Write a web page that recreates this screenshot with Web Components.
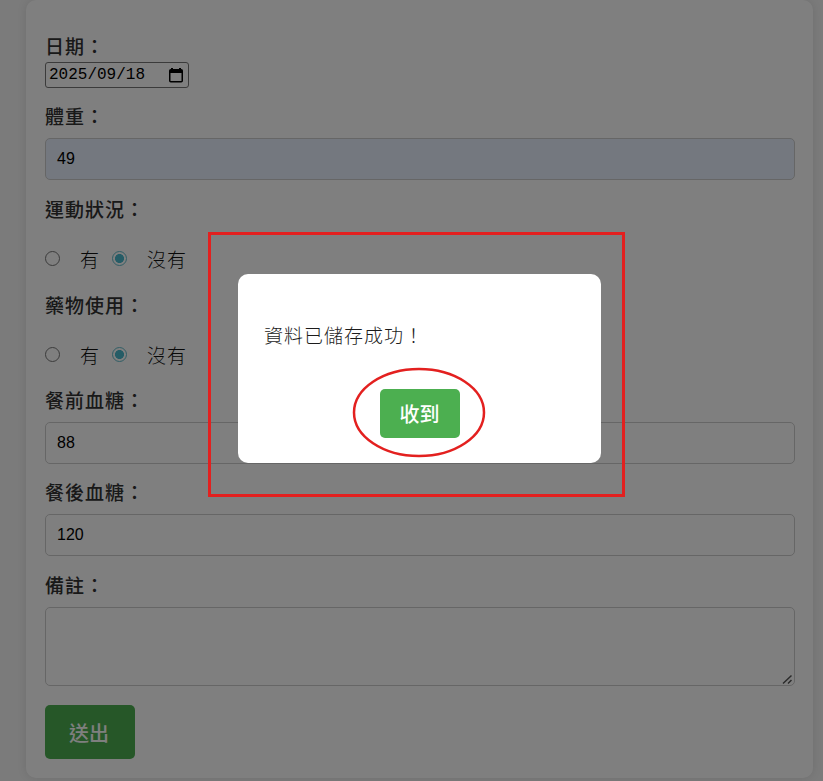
<!DOCTYPE html>
<html lang="zh-Hant">
<head>
<meta charset="utf-8">
<title>健康紀錄</title>
<style>
  html, body { margin: 0; height: 781px; overflow: hidden; background: #f6f6f6; }
  body { font-family: "Noto Sans CJK TC", "Noto Sans", sans-serif; color: #333; }
</style>
</head>
<body>

<x-form-card>
  <x-date-field label="日期：" value="2025/09/18"></x-date-field>
  <x-text-field label="體重：" value="49" autofilled style="margin-bottom:17px"></x-text-field>
  <x-radio-field label="運動狀況：" name="exercise"></x-radio-field>
  <x-radio-field label="藥物使用：" name="medicine"></x-radio-field>
  <x-text-field label="餐前血糖：" value="88"></x-text-field>
  <x-text-field label="餐後血糖：" value="120" style="margin-bottom:17px"></x-text-field>
  <x-note-field label="備註："></x-note-field>
  <x-button>送出</x-button>
</x-form-card>

<x-modal>
  資料已儲存成功！
  <x-button slot="action" small>收到</x-button>
</x-modal>

<script>
const labelCss = `
  .label { display: block; font-size: 19px; letter-spacing: 1px; font-weight: 500; line-height: 24px; color: #333; }
`;

class XFormCard extends HTMLElement {
  constructor() {
    super();
    this.attachShadow({ mode: 'open' });
    this.shadowRoot.innerHTML = `
      <style>
        :host {
          display: block;
          box-sizing: border-box;
          width: 787px;
          height: 778px;
          margin-left: 26px;
          padding: 34px 18px 0 19px;
          background: #fff;
          border-radius: 10px;
          box-shadow: 0 0 10px rgba(0,0,0,0.1);
        }
      </style>
      <slot></slot>
    `;
  }
}

class XDateField extends HTMLElement {
  constructor() {
    super();
    this.attachShadow({ mode: 'open' });
  }

  connectedCallback() {
    this.shadowRoot.innerHTML = `
      <style>
        :host { display: block; margin-bottom: 16px; }
        ${labelCss}
        .date {
          box-sizing: border-box;
          display: flex;
          align-items: center;
          justify-content: space-between;
          width: 144px;
          height: 26px;
          margin-top: 4px;
          padding: 0 3px;
          border: 1px solid #767676;
          border-radius: 3px;
          font: 16px "Liberation Mono", monospace;
          color: #000;
        }
        svg { display: block; margin-right: 1px; }
      </style>
      <span class="label">${this.getAttribute('label')}</span>
      <div class="date">
        <span>${this.getAttribute('value')}</span>
        <svg width="16" height="16" viewBox="0 0 16 16">
          <path d="M4 1v2M12 1v2" stroke="#000" stroke-width="2" fill="none"/>
          <rect x="1.75" y="2.75" width="12.5" height="12" rx="1" fill="none" stroke="#000" stroke-width="1.5"/>
          <rect x="2" y="3" width="12" height="3" fill="#000"/>
        </svg>
      </div>
    `;
  }
}

class XTextField extends HTMLElement {
  constructor() {
    super();
    this.attachShadow({ mode: 'open' });
  }

  connectedCallback() {
    this.shadowRoot.innerHTML = `
      <style>
        :host { display: block; margin-bottom: 16px; }
        ${labelCss}
        .input {
          box-sizing: border-box;
          height: 42px;
          margin-top: 10px;
          padding: 0 11px;
          border: 1px solid #ccc;
          border-radius: 5px;
          font: 16px/40px "Liberation Sans", Arial, sans-serif;
          color: #000;
        }
        :host([autofilled]) .input { background: #e8f0fe; }
      </style>
      <span class="label">${this.getAttribute('label')}</span>
      <div class="input">${this.getAttribute('value')}</div>
    `;
  }
}

class XRadioField extends HTMLElement {
  constructor() {
    super();
    this.attachShadow({ mode: 'open' });
  }

  connectedCallback() {
    const name = this.getAttribute('name');
    this.shadowRoot.innerHTML = `
      <style>
        :host { display: block; margin-bottom: 19px; }
        ${labelCss}
        .options {
          display: flex;
          align-items: center;
          height: 30px;
          margin-top: 22.5px;
          font-size: 19px;
          letter-spacing: 1px;
          font-weight: 300;
          color: #111;
        }
        input { width: 15px; height: 15px; margin: 0; }
        input:checked {
          appearance: none;
          box-sizing: border-box;
          border: 1px solid #62bccb;
          border-radius: 50%;
          background: radial-gradient(circle, #4ab8cc 0 4.2px, transparent 4.8px);
        }
        .yes { margin: 0 12px 0 20px; }
        .no { margin-left: 20px; }
      </style>
      <span class="label">${this.getAttribute('label')}</span>
      <div class="options">
        <input type="radio" name="${name}"><span class="yes">有</span>
        <input type="radio" name="${name}" checked><span class="no">沒有</span>
      </div>
    `;
  }
}

class XNoteField extends HTMLElement {
  constructor() {
    super();
    this.attachShadow({ mode: 'open' });
  }

  connectedCallback() {
    this.shadowRoot.innerHTML = `
      <style>
        :host { display: block; margin-bottom: 19px; }
        ${labelCss}
        .wrap { position: relative; margin-top: 10px; }
        textarea {
          box-sizing: border-box;
          display: block;
          width: 100%;
          height: 79px;
          border: 1px solid #ccc;
          border-radius: 5px;
          background: #fff;
          resize: none;
        }
        svg { position: absolute; right: 3px; bottom: 1px; }
      </style>
      <span class="label">${this.getAttribute('label')}</span>
      <div class="wrap">
        <textarea></textarea>
        <svg width="12" height="12" viewBox="0 0 12 12">
          <path d="M3 10.5L11.5 2.5M8 10.5L11.5 7" stroke="#555" stroke-width="1.5" fill="none"/>
        </svg>
      </div>
    `;
  }
}

class XButton extends HTMLElement {
  constructor() {
    super();
    this.attachShadow({ mode: 'open' });
    this.shadowRoot.innerHTML = `
      <style>
        :host {
          display: inline-flex;
          align-items: center;
          justify-content: center;
          box-sizing: border-box;
          width: 90px;
          height: 54px;
          padding-right: 2px;
          border-radius: 5px;
          background: #4caf50;
          color: #fff;
          font-size: 20px;
          font-weight: 500;
          cursor: pointer;
        }
        :host([small]) { width: 80px; height: 49px; padding-right: 0; }
      </style>
      <slot></slot>
    `;
  }
}

class XModal extends HTMLElement {
  constructor() {
    super();
    this.attachShadow({ mode: 'open' });
    this.shadowRoot.innerHTML = `
      <style>
        :host { position: fixed; inset: 0; display: block; background: rgba(0,0,0,0.5); }
        .box {
          position: absolute;
          left: 238px;
          top: 274px;
          box-sizing: border-box;
          width: 363px;
          height: 189px;
          padding: 47px 26px 25px;
          background: #fff;
          border-radius: 10px;
          font-size: 19px;
          letter-spacing: 1px;
          font-weight: 300;
          line-height: 28px;
          color: #1c1c1c;
        }
        .action { display: flex; justify-content: center; margin-top: 40px; letter-spacing: 0; }
        .mark { position: absolute; pointer-events: none; }
        .rect { left: 208px; top: 232px; width: 417px; height: 265px; box-sizing: border-box; border: 3px solid #e3201f; }
        .ring { left: 352px; top: 367px; }
      </style>
      <div class="box">
        <slot></slot>
        <div class="action"><slot name="action"></slot></div>
      </div>
      <div class="mark rect"></div>
      <svg class="mark ring" width="134" height="91" viewBox="0 0 134 91">
        <ellipse cx="67" cy="45.5" rx="65" ry="43.5" fill="none" stroke="#e3201f" stroke-width="2.5"/>
      </svg>
    `;
  }
}

customElements.define('x-form-card', XFormCard);
customElements.define('x-date-field', XDateField);
customElements.define('x-text-field', XTextField);
customElements.define('x-radio-field', XRadioField);
customElements.define('x-note-field', XNoteField);
customElements.define('x-button', XButton);
customElements.define('x-modal', XModal);
</script>
</body>
</html>
